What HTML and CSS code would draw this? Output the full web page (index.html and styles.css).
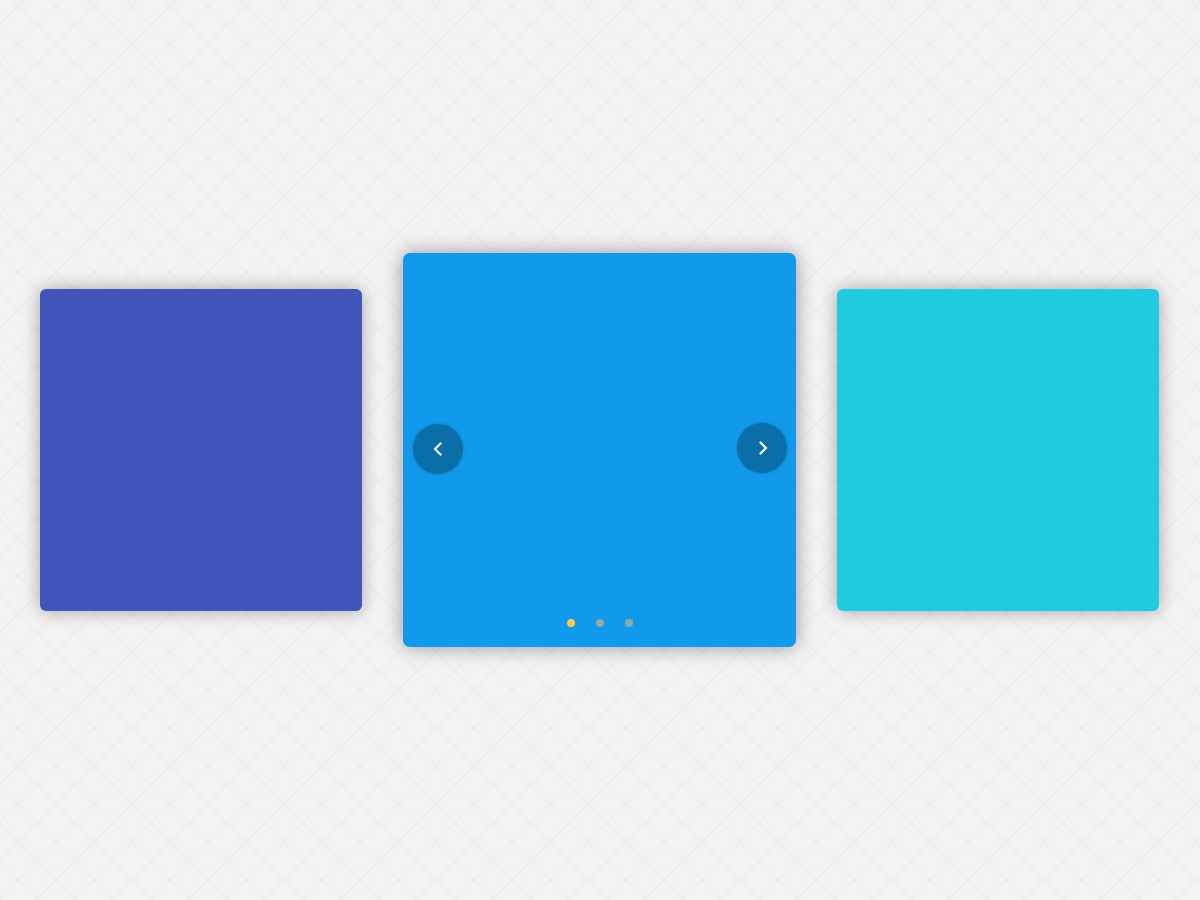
FILE: index.html
```html
<!DOCTYPE html>
<html lang="en">
<head>
<meta charset="utf-8">
<title>Carousel</title>
<link rel="stylesheet" href="styles.css">
</head>
<body>
<main class="stage">
  <div class="card card-side card-indigo"></div>
  <div class="card card-main">
    <button class="nav nav-prev" aria-label="Previous">
      <svg viewBox="0 0 24 24" width="24" height="24"><path d="M14.5 6.5 9 12l5.5 5.5" fill="none" stroke="#fff" stroke-width="2" stroke-linecap="square"/></svg>
    </button>
    <button class="nav nav-next" aria-label="Next">
      <svg viewBox="0 0 24 24" width="24" height="24"><path d="M9.5 6.5 15 12l-5.5 5.5" fill="none" stroke="#fff" stroke-width="2" stroke-linecap="square"/></svg>
    </button>
    <div class="dots">
      <span class="dot dot-active"></span>
      <span class="dot"></span>
      <span class="dot"></span>
    </div>
  </div>
  <div class="card card-side card-cyan"></div>
</main>
</body>
</html>
```

FILE: styles.css
```css
html, body {
  margin: 0;
  padding: 0;
  height: 100%;
}
body {
  font-family: "Liberation Sans", Arial, sans-serif;
  background-color: #f3f3f3;
  background-image:
    linear-gradient(45deg, transparent calc(50% - 2px), #ededed 50%, transparent calc(50% + 2px)),
    linear-gradient(-45deg, transparent calc(50% - 2px), #ededed 50%, transparent calc(50% + 2px));
  background-size: 38px 38px;
  background-position: 18px 6px;
}
.stage {
  height: 900px;
  display: flex;
  align-items: center;
  justify-content: center;
  gap: 41px;
  padding-right: 1px;
  box-sizing: border-box;
}
.card {
  flex: none;
  border-radius: 6px;
  box-shadow: 0 0 18px rgba(0, 0, 0, 0.33);
}
.card-side {
  width: 322px;
  height: 322px;
}
.card-indigo { background: #4255bb; }
.card-cyan { background: #21cbdf; }
.card-main {
  width: 393px;
  height: 394px;
  border-radius: 7px;
  background: #1199eb;
  box-shadow: 0 0 20px rgba(0, 0, 0, 0.38);
  display: flex;
  align-items: center;
  justify-content: space-between;
  padding: 0 9px 0 10px;
  box-sizing: border-box;
  position: relative;
}
.nav {
  width: 50px;
  height: 50px;
  border: none;
  border-radius: 50%;
  background: rgba(0, 0, 0, 0.28);
  box-shadow: 0 0 3px rgba(0, 0, 0, 0.25);
  display: flex;
  align-items: center;
  justify-content: center;
  padding: 0;
  cursor: pointer;
}
.nav-prev { margin-top: -2px; }
.nav-next { margin-top: -4px; }
.nav-prev svg { margin-left: -1px; }
.nav-next svg { margin-left: 1px; }
.dots {
  position: absolute;
  left: 0;
  right: 0;
  bottom: 20px;
  display: flex;
  justify-content: center;
  gap: 21px;
}
.dot {
  width: 8px;
  height: 8px;
  border-radius: 50%;
  background: #8eaaa8;
}
.dot-active { background: #ffc94f; }
```
